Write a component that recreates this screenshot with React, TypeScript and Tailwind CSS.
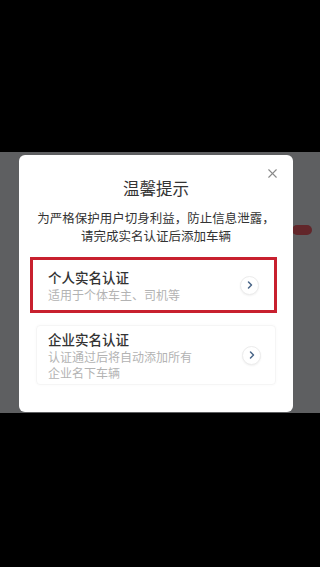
import { X, ChevronRight } from "lucide-react";

function Option({
  title,
  desc,
  active,
}: {
  title: string;
  desc: React.ReactNode;
  active?: boolean;
}) {
  return (
    <div
      className={
        active
          ? "ml-[11px] mr-[16px] flex h-[56px] items-center justify-between border-[3px] border-[#c8202f] pl-[15px] pr-[15px]"
          : "ml-[17px] mr-[17px] flex h-[60px] items-center justify-between rounded-[4px] border border-[#f5f5f5] pl-[11px] pr-[14px] shadow-[0_0_3px_rgba(0,0,0,0.03)]"
      }
    >
      <div className="flex flex-col">
        <div className="text-[13.5px] leading-[18px] font-medium text-[#333]">
          {title}
        </div>
        <div className="mt-[1px] text-[12px] leading-[16px] text-[#b3b3b3]">
          {desc}
        </div>
      </div>
      <div className="flex h-[19px] w-[19px] items-center justify-center rounded-full border border-[#ececec] bg-white shadow-[0_1px_2px_rgba(0,0,0,0.06)]">
        <ChevronRight size={12} strokeWidth={3} className="text-[#4a6688]" />
      </div>
    </div>
  );
}

export default function App() {
  return (
    <div
      className="flex h-[567px] w-[320px] flex-col bg-black"
      style={{ fontFamily: '"Noto Sans CJK SC", "Noto Sans", sans-serif' }}
    >
      <div className="h-[152px]" />
      <div className="relative h-[261px] bg-[#5e5f61] pt-[3px]">
        <div className="absolute right-[8px] top-[73px] h-[10px] w-[20px] rounded-full bg-[#62262a]" />
        <div className="relative ml-[19px] h-[257px] w-[274px] rounded-[6px] bg-white pt-[21px]">
          <button className="absolute right-[13px] top-[11px] text-[#8a8a8a]">
            <X size={15} strokeWidth={1.8} />
          </button>
          <div className="text-center text-[16.5px] leading-[24px] text-[#333]">
            温馨提示
          </div>
          <p className="mt-[9px] text-center text-[12.5px] leading-[18px] text-[#333]">
            为严格保护用户切身利益，防止信息泄露，
            <br />
            请完成实名认证后添加车辆
          </p>
          <div className="mt-[12px]">
            <Option title="个人实名认证" desc="适用于个体车主、司机等" active />
          </div>
          <div className="mt-[12px]">
            <Option
              title="企业实名认证"
              desc={
                <>
                  认证通过后将自动添加所有
                  <br />
                  企业名下车辆
                </>
              }
            />
          </div>
        </div>
      </div>
      <div className="flex-1" />
    </div>
  );
}
